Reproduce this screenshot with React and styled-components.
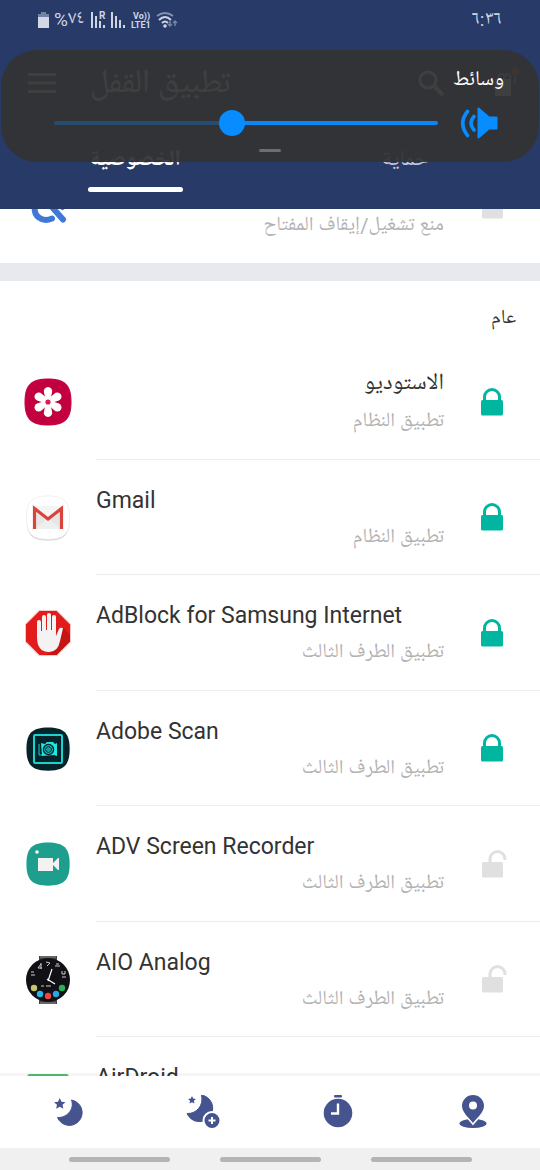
import React, { useLayoutEffect, useRef, useState } from "react";
import styled, { createGlobalStyle } from "styled-components";

const GlobalStyle = createGlobalStyle`
  * { box-sizing: border-box; }
  body {
    margin: 0;
    background: #fff;
    font-family: Roboto, "Noto Naskh Arabic UI", "Noto Naskh Arabic", "DejaVu Sans", sans-serif;
  }
  button { font: inherit; border: 0; padding: 0; background: none; cursor: pointer; }
`;

const Screen = styled.div`
  position: relative;
  display: flex;
  flex-direction: column;
  height: 100vh;
  overflow: hidden;
`;

const Header = styled.header`
  flex: none;
  background: #283a67;
  color: #fff;
`;

const StatusBar = styled.div`
  display: flex;
  align-items: center;
  justify-content: space-between;
  height: 40px;
  padding: 0 38px;
  font-size: 19px;
  line-height: 32px;
  color: #cfd5e4;
`;

const StatusGroup = styled.div`
  display: flex;
  align-items: center;
  gap: 5px;
`;

const BatteryLevel = styled.span`
  padding-right: 2px;
`;

const TitleBar = styled.div`
  display: flex;
  align-items: center;
  height: 86px;
  padding: 0 24px 0 28px;
`;

const Title = styled.h1`
  flex: 1;
  margin: 0;
  padding: 4px 0 0 34px;
  font-size: 33px;
  line-height: 40px;
  font-weight: 400;
`;

const IconButton = styled.button`
  display: flex;
  align-items: center;
  justify-content: center;
  color: inherit;
`;

const Actions = styled.div`
  display: flex;
  align-items: center;
  gap: 48px;
`;

const Tabs = styled.nav`
  display: flex;
  height: 83px;
`;

const Tab = styled.button`
  flex: 1;
  display: flex;
  flex-direction: column;
  align-items: center;
  padding-top: 19px;
  font-size: 22px;
  line-height: 32px;
  font-weight: ${(p) => (p.$active ? 700 : 400)};
  color: ${(p) => (p.$active ? "#fff" : "#c5cbdb")};

  &::after {
    content: "";
    width: 95px;
    height: 5px;
    margin-top: 10px;
    border-radius: 3px;
    background: ${(p) => (p.$active ? "#fff" : "transparent")};
  }
`;

const VolumePanel = styled.section`
  position: absolute;
  top: 50px;
  left: 1px;
  right: 1px;
  display: flex;
  flex-direction: column;
  height: 112px;
  border-radius: 36px;
  background: rgba(51, 51, 51, 0.94);
  color: #fff;
`;

const VolumeLabel = styled.label`
  height: 54px;
  padding: 15px 35px 0;
  font-size: 21px;
  line-height: 32px;
  text-align: right;
`;

const VolumeRow = styled.div`
  display: flex;
  align-items: center;
  gap: 22px;
  height: 38px;
  padding: 0 40px 0 53px;
`;

const VolumeSlider = styled.input`
  flex: 1;
  min-width: 0;
  height: 26px;
  margin: 0;
  appearance: none;
  background: none;

  &::-webkit-slider-runnable-track {
    height: 4px;
    border-radius: 2px;
    background: linear-gradient(to left, #0a86f5 var(--level), #274c6e var(--level));
  }
  &::-webkit-slider-thumb {
    appearance: none;
    width: 26px;
    height: 26px;
    margin-top: -11px;
    border-radius: 50%;
    background: #078dff;
  }
`;

const PanelHandle = styled.div`
  align-self: center;
  width: 22px;
  height: 3px;
  margin-top: 7px;
  border-radius: 2px;
  background: #6d6e70;
`;

const List = styled.main`
  flex: 1;
  min-height: 0;
  overflow-y: auto;
  scrollbar-width: none;
`;

const Group = styled.ul`
  margin: 0;
  padding: 0;
  list-style: none;
`;

const Separator = styled.div`
  height: 18px;
  background: #e7e9ee;
`;

const SectionTitle = styled.h2`
  margin: 0;
  padding: 22px 24px 9px;
  font-size: 20px;
  line-height: 32px;
  font-weight: 400;
  color: #333;
  text-align: right;
`;

const Row = styled.li`
  display: grid;
  grid-template-columns: 96px 1fr;
  height: 115px;

  ${Group} + ${Separator} ~ ${Group} > &:nth-child(odd) {
    height: 116px;
  }
`;

const AppIcon = styled.div`
  display: flex;
  align-items: center;
  justify-content: center;
`;

const RowBody = styled.div`
  display: grid;
  grid-template-columns: 1fr 96px;
  min-width: 0;
  border-bottom: 1px solid ${(p) => (p.$last ? "transparent" : "#ececec")};
`;

const RowText = styled.div`
  padding-top: 24px;
`;

const AppName = styled.div`
  height: 34px;
  font-size: 23px;
  line-height: 34px;
  color: #333;
`;

const AppKind = styled.div`
  margin-top: 4px;
  font-size: 20px;
  line-height: 32px;
  color: #b2b2b2;
  text-align: right;
`;

const BottomNav = styled.nav`
  position: relative;
  flex: none;
  display: flex;
  height: 72px;
  background: #fff;
  box-shadow: 0 -3px 0 rgba(0, 0, 0, 0.04);
`;

const NavButton = styled.button`
  flex: 1;
  display: flex;
  align-items: center;
  justify-content: center;
  color: #45538f;
`;

const SystemBar = styled.div`
  flex: none;
  display: flex;
  justify-content: center;
  align-items: center;
  gap: 50px;
  height: 22px;
  background: #f0f0f0;
`;

const Pill = styled.span`
  width: 101px;
  height: 5px;
  border-radius: 3px;
  background: #b4b4b4;
`;

const SQUIRCLE = "M24 1C41 1 47 7 47 24S41 47 24 47 1 41 1 24 7 1 24 1Z";

function BatteryIcon() {
  return (
    <svg width="11" height="16" viewBox="0 0 11 16">
      <path d="M3 0h5v2h3v3H0V2h3z" fill="#7482a5" />
      <path d="M0 5h11v11H0z" fill="#d3d8e5" />
    </svg>
  );
}

function SignalIcon({ roaming }) {
  return (
    <svg width="15" height="18" viewBox="0 0 15 18" fill="#cfd5e4">
      <path d={roaming ? "M0 1h2v16H0zM4 5h2v12H4zM8 10h2v7H8zM12 14h2v3h-2z" : "M0 1h2v16H0zM4 5h2v12H4zM8 9h2v8H8zM12 14h2v3h-2z"} />
      {roaming && <text x="8" y="8" fontSize="10" fontWeight="700">R</text>}
    </svg>
  );
}

function LteIcon() {
  return (
    <svg width="20" height="18" viewBox="0 0 20 18" fill="#cfd5e4" fontWeight="700" overflow="visible">
      <text x="2" y="8" fontSize="9">Vo))</text>
      <text x="0" y="17" fontSize="9">LTE1</text>
    </svg>
  );
}

function WifiIcon() {
  return (
    <svg width="23" height="18" viewBox="0 0 23 18" fill="none" strokeWidth="2">
      <path d="M1 5Q9-1 17 5" stroke="#8390b0" />
      <path d="M3 9Q9 3 15 9M6 12Q9 9 12 12" stroke="#cfd5e4" />
      <circle cx="9" cy="15" r="1.800" fill="#cfd5e4" />
      <path d="M14 10v5M12 13l2 2 2-2M19 15v-5M17 12l2-2 2 2" stroke="#7482a5" strokeWidth="1.500" />
    </svg>
  );
}

function MenuIcon() {
  return (
    <svg width="28" height="20" viewBox="0 0 28 20" fill="currentColor">
      <path d="M0 0h28v3H0zM0 8.500h28v3H0zM0 17h28v3H0z" />
    </svg>
  );
}

function SearchIcon() {
  return (
    <svg width="26" height="26" viewBox="0 0 26 26" fill="none" stroke="currentColor" strokeWidth="3">
      <circle cx="10" cy="10" r="8" />
      <path d="M16 16l9 9" strokeWidth="4" />
    </svg>
  );
}

function BonusIcon() {
  return (
    <svg width="24" height="30" viewBox="0 0 24 30" overflow="visible">
      <path d="M3 11h16v17H3z" fill="#fff" />
      <path d="M6 11q0-5 4-5 3 0 2 5 1-5 4-5 3 1 2 5M23 9v7" fill="none" stroke="#fff" strokeWidth="2" opacity=".6" />
      <circle cx="23" cy="3" r="4" fill="#f33" />
    </svg>
  );
}

function SpeakerIcon() {
  return (
    <svg width="39" height="32" viewBox="0 0 39 32" fill="none" stroke="#078dff">
      <path d="M18.500 1.500L29 10.500h7.500v11H29l-10.500 9z" fill="#078dff" strokeWidth="2" strokeLinejoin="round" />
      <path d="M7.500 4.500Q-2 16 7.500 28.500M14 9.500Q8 16 14 23" strokeWidth="3.600" strokeLinecap="round" />
    </svg>
  );
}

function LockIcon({ locked }) {
  return locked ? (
    <svg width="22" height="28" viewBox="0 0 22 28">
      <path d="M3.500 13V9a7.500 7.500 0 0 1 15 0v4" fill="none" stroke="#00b6a0" strokeWidth="3" />
      <rect y="12" width="22" height="15.500" rx="1.500" fill="#00b6a0" />
    </svg>
  ) : (
    <svg width="26" height="28" viewBox="-3 0 26 28" overflow="visible">
      <path d="M8 13V9a7.500 7.500 0 0 1 15 0v1" fill="none" stroke="#e0e0e0" strokeWidth="3" />
      <rect y="12" width="21" height="15.500" rx="1.500" fill="#e0e0e0" />
    </svg>
  );
}

function SwitchIcon() {
  return (
    <svg width="40" height="36" viewBox="0 0 40 36" fill="none" stroke="#3f78d8" strokeWidth="6" strokeLinecap="round">
      <path d="M24 30.500C14 35 5 28 7 18M24 19l11 12.500M34 18.500l.5.500" />
    </svg>
  );
}

function GalleryIcon() {
  return (
    <svg width="48" height="48" viewBox="0 0 48 48">
      <path d={SQUIRCLE} fill="#c3003f" stroke="#c3003f" />
      {[0, 60, 120, 180, 240, 300].map((a) => (
        <path key={a} d="M22 24L20 14.500a4.200 4.200 0 1 1 8 0L26 24Z" fill="#fff" transform={`rotate(${a} 24 24)`} />
      ))}
      <circle cx="24" cy="24" r="3.500" fill="#fff" />
      <circle cx="24" cy="24" r="2.600" fill="#e5184e" />
    </svg>
  );
}

function GmailIcon() {
  return (
    <svg width="48" height="48" viewBox="0 0 48 48">
      <path d={SQUIRCLE} fill="#d4d4d4" transform="translate(1.500 2.500) scale(.94)" />
      <path d={SQUIRCLE} fill="#fff" stroke="#efefef" transform="translate(1.500 1) scale(.94)" />
      <path d="M9 13h30v22H9z" fill="#e6e6e6" />
      <path d="M11 35l13-11 13 11z" fill="#efefef" />
      <path d="M9 13l15 11 15-11-2-1H11z" fill="#f5f5f5" />
      <path d="M10.500 35V14.500L24 25l13.500-10.500V35" fill="none" stroke="#d9453a" strokeWidth="3.200" />
    </svg>
  );
}

function AdBlockIcon() {
  return (
    <svg width="48" height="48" viewBox="0 0 48 48">
      <path d="M15 1h18l14 14v18L33 47H15L1 33V15z" fill="#f2c9c9" />
      <path d="M15.500 2h17L46 15.500v17L32.500 46h-17L2 32.500v-17z" fill="#e31b1b" />
      <path d="M30 42l9-24 7 8v6.500L32.500 46H22z" fill="#c41414" />
      <path d="M13 28V13q0-2 2-2t2 2v9h1V8q0-2 2-2t2 2v13h1V6q0-2 2-2t2 2v15h1V8q0-2 2-2t2 2v19l3-7q1-2 4-1l-3 13q-2 11-11 11-12 0-12-15z" fill="#f3f3f3" />
    </svg>
  );
}

function ScanIcon() {
  return (
    <svg width="48" height="48" viewBox="0 0 48 48" fill="none">
      <path d={SQUIRCLE} fill="#04232a" transform="translate(1.500 1.500) scale(.94)" />
      <rect x="10" y="10" width="28" height="28" rx="1" stroke="#19d3cf" strokeWidth="2" />
      <path d="M17 18l4 1 2-2h6l2 2 2-1v13l-3-1-12 1z" fill="#1fe6df" />
      <path d="M15 19v11h3" stroke="#19d3cf" />
      <circle cx="24.500" cy="24.500" r="5" fill="#1fe6df" stroke="#04232a" strokeWidth="1.500" />
      <circle cx="24.500" cy="24.500" r="3" fill="#159c9b" stroke="#04232a" />
    </svg>
  );
}

function RecorderIcon() {
  return (
    <svg width="48" height="48" viewBox="0 0 48 48">
      <path d={SQUIRCLE} fill="#1e9f8e" transform="translate(1.500 1.500) scale(.94)" />
      <circle cx="13" cy="12" r="1.800" fill="#fff" />
      <path d="M14 18h15v5l5-5h1v12h-1l-5-5v6H14z" fill="#f2f2f2" />
    </svg>
  );
}

function WatchIcon() {
  return (
    <svg width="48" height="50" viewBox="0 0 48 50">
      <path d="M15 1h18v48H15z" fill="#444" />
      <path d="M16 2h16M16 48h16" stroke="#8a8a8a" />
      <circle cx="24" cy="25" r="22" fill="#111115" />
      <path d="M24 26l4-12M23 24l8 5" stroke="#fff" strokeWidth="1.200" />
      <path d="M17 9l-3 4h4M17 8v6M22 7l4 1-3 3M31 11h5M32 9h3M7 17h3M7 20h4M38 16v3h3v-3M38 22h4M17 31h3M22 31h5" stroke="#ccc" fill="none" />
      <circle cx="10" cy="33" r="3.200" fill="#c9c56b" />
      <circle cx="16" cy="39" r="3.200" fill="#25b6e6" />
      <circle cx="24" cy="41" r="3.200" fill="#ef4444" />
      <circle cx="32" cy="39" r="3.200" fill="#25a8e6" />
      <circle cx="38" cy="33" r="3.200" fill="#22b455" />
    </svg>
  );
}

function AirDroidIcon() {
  return (
    <svg width="42" height="42" viewBox="0 0 42 42">
      <rect width="42" height="42" rx="3" fill="#4fc074" />
    </svg>
  );
}

const STAR = "M5 0l1.500 3.200 3.500.4-2.600 2.300.7 3.500L5 7.700 1.900 9.400l.7-3.500L0 3.600l3.500-.4z";

function NightIcon() {
  return (
    <svg width="30" height="30" viewBox="0 0 30 30" fill="currentColor">
      <path d={STAR} transform="translate(1 1) scale(1.150)" />
      <path d="M18.500 3A12.800 12.800 0 1 1 4.500 20.500C13 21 22 13 18.500 3Z" stroke="currentColor" strokeLinejoin="round" />
    </svg>
  );
}

function NightAddIcon() {
  return (
    <svg width="34" height="34" viewBox="0 0 34 34" fill="currentColor">
      <path d={STAR} transform="translate(2 1) scale(.8)" />
      <path d="M15.500 0A13.400 13.400 0 1 1 1 18.500C10 19 18 11 15.500 0Z" stroke="currentColor" strokeLinejoin="round" />
      <circle cx="26" cy="25.500" r="8.500" stroke="#fff" strokeWidth="2" />
      <path d="M26 22v7M22.500 25.500h7" stroke="#fff" strokeWidth="2" />
    </svg>
  );
}

function TimerIcon() {
  return (
    <svg width="30" height="34" viewBox="0 0 30 34" fill="currentColor">
      <rect x="11" y="0" width="8" height="2.500" rx="1" />
      <circle cx="15" cy="18" r="14.300" />
      <path d="M15 8.500V18.500H8" fill="none" stroke="#fff" strokeWidth="2.400" />
    </svg>
  );
}

function PlaceIcon() {
  return (
    <svg width="28" height="34" viewBox="0 0 28 34" fill="currentColor">
      <ellipse cx="14" cy="28.500" rx="13.500" ry="4.500" />
      <path d="M14 28C10 23 3 17 3 11a11 11 0 0 1 22 0c0 6-7 12-11 17Z" stroke="#fff" strokeWidth="3" paintOrder="stroke" />
      <circle cx="14" cy="10.500" r="4" fill="#fff" />
    </svg>
  );
}

const SYSTEM = "تطبيق النظام";
const THIRD_PARTY = "تطبيق الطرف الثالث";

const APPS = [
  { name: "الاستوديو", kind: SYSTEM, icon: <GalleryIcon />, locked: true },
  { name: "Gmail", kind: SYSTEM, icon: <GmailIcon />, locked: true },
  { name: "AdBlock for Samsung Internet", kind: THIRD_PARTY, icon: <AdBlockIcon />, locked: true },
  { name: "Adobe Scan", kind: THIRD_PARTY, icon: <ScanIcon />, locked: true },
  { name: "ADV Screen Recorder", kind: THIRD_PARTY, icon: <RecorderIcon />, locked: false },
  { name: "AIO Analog", kind: THIRD_PARTY, icon: <WatchIcon />, locked: false },
  { name: "AirDroid", kind: "", icon: <AirDroidIcon />, locked: false },
];

function AppRow({ name, kind, icon, locked: initial, last }) {
  const [locked, setLocked] = useState(initial);
  return (
    <Row>
      <AppIcon>{icon}</AppIcon>
      <RowBody $last={last}>
        <RowText>
          <AppName dir="auto">{name}</AppName>
          <AppKind dir="rtl">{kind}</AppKind>
        </RowText>
        <IconButton aria-pressed={locked} onClick={() => setLocked(!locked)}>
          <LockIcon locked={locked} />
        </IconButton>
      </RowBody>
    </Row>
  );
}

export default function App() {
  const list = useRef(null);
  const [volume, setVolume] = useState(54);

  useLayoutEffect(() => {
    list.current.scrollTop = 61;
  }, []);

  return (
    <>
      <GlobalStyle />
      <Screen>
        <Header>
          <StatusBar>
            <StatusGroup>
              <BatteryIcon />
              <BatteryLevel>%٧٤</BatteryLevel>
              <SignalIcon roaming />
              <SignalIcon />
              <LteIcon />
              <WifiIcon />
            </StatusGroup>
            <time>٦:٣٦</time>
          </StatusBar>
          <TitleBar>
            <IconButton><MenuIcon /></IconButton>
            <Title>تطبيق القفل</Title>
            <Actions>
              <IconButton><SearchIcon /></IconButton>
              <IconButton><BonusIcon /></IconButton>
            </Actions>
          </TitleBar>
          <Tabs>
            <Tab $active>الخصوصية</Tab>
            <Tab>حماية</Tab>
          </Tabs>
        </Header>

        <List ref={list}>
          <Group>
            <AppRow name="" kind="منع تشغيل/إيقاف المفتاح" icon={<SwitchIcon />} locked={false} last />
          </Group>
          <Separator />
          <SectionTitle>عام</SectionTitle>
          <Group>
            {APPS.map((app) => <AppRow key={app.name} {...app} />)}
          </Group>
        </List>

        <BottomNav>
          <NavButton><NightIcon /></NavButton>
          <NavButton><NightAddIcon /></NavButton>
          <NavButton><TimerIcon /></NavButton>
          <NavButton><PlaceIcon /></NavButton>
        </BottomNav>
        <SystemBar>
          <Pill />
          <Pill />
          <Pill />
        </SystemBar>

        <VolumePanel>
          <VolumeLabel htmlFor="volume">وسائط</VolumeLabel>
          <VolumeRow>
            <VolumeSlider
              id="volume"
              type="range"
              dir="rtl"
              value={volume}
              onChange={(e) => setVolume(Number(e.target.value))}
              style={{ "--level": `${volume}%` }}
            />
            <SpeakerIcon />
          </VolumeRow>
          <PanelHandle />
        </VolumePanel>
      </Screen>
    </>
  );
}
